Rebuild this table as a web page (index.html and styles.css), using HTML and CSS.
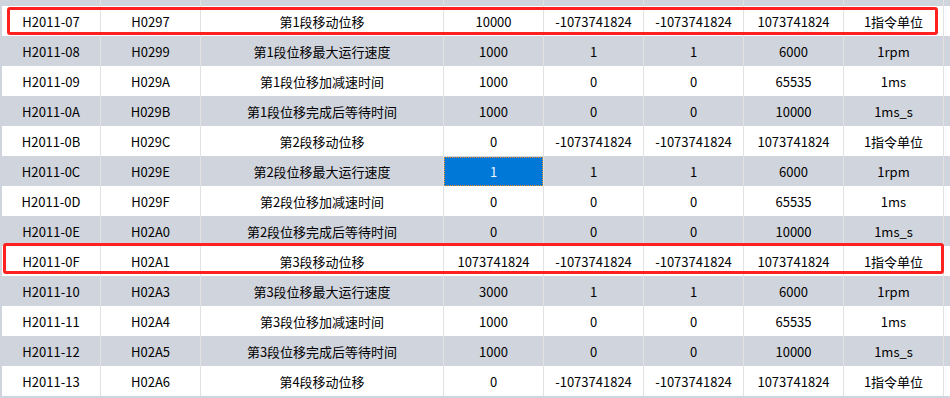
FILE: index.html
```html
<!DOCTYPE html>
<html lang="zh-CN">
<head>
<meta charset="utf-8">
<title>参数表</title>
<link rel="stylesheet" href="styles.css">
</head>
<body>
<div class="grid">
  <div class="row gap"><div class="c"></div><div class="c"></div><div class="c"></div><div class="c"></div><div class="c"></div><div class="c"></div><div class="c"></div><div class="c"></div><div class="f"></div></div>
  <div class="row w"><div class="c">H2011-07</div><div class="c">H0297</div><div class="c">第1段移动位移</div><div class="c">10000</div><div class="c">-1073741824</div><div class="c">-1073741824</div><div class="c">1073741824</div><div class="c">1指令单位</div><div class="f"></div></div>
  <div class="row g"><div class="c">H2011-08</div><div class="c">H0299</div><div class="c">第1段位移最大运行速度</div><div class="c">1000</div><div class="c">1</div><div class="c">1</div><div class="c">6000</div><div class="c">1rpm</div><div class="f"></div></div>
  <div class="row w"><div class="c">H2011-09</div><div class="c">H029A</div><div class="c">第1段位移加减速时间</div><div class="c">1000</div><div class="c">0</div><div class="c">0</div><div class="c">65535</div><div class="c">1ms</div><div class="f"></div></div>
  <div class="row g"><div class="c">H2011-0A</div><div class="c">H029B</div><div class="c">第1段位移完成后等待时间</div><div class="c">1000</div><div class="c">0</div><div class="c">0</div><div class="c">10000</div><div class="c">1ms_s</div><div class="f"></div></div>
  <div class="row w"><div class="c">H2011-0B</div><div class="c">H029C</div><div class="c">第2段移动位移</div><div class="c">0</div><div class="c">-1073741824</div><div class="c">-1073741824</div><div class="c">1073741824</div><div class="c">1指令单位</div><div class="f"></div></div>
  <div class="row g"><div class="c">H2011-0C</div><div class="c">H029E</div><div class="c">第2段位移最大运行速度</div><div class="c sel"><span class="selbox">1</span></div><div class="c">1</div><div class="c">1</div><div class="c">6000</div><div class="c">1rpm</div><div class="f"></div></div>
  <div class="row w"><div class="c">H2011-0D</div><div class="c">H029F</div><div class="c">第2段位移加减速时间</div><div class="c">0</div><div class="c">0</div><div class="c">0</div><div class="c">65535</div><div class="c">1ms</div><div class="f"></div></div>
  <div class="row g"><div class="c">H2011-0E</div><div class="c">H02A0</div><div class="c">第2段位移完成后等待时间</div><div class="c">0</div><div class="c">0</div><div class="c">0</div><div class="c">10000</div><div class="c">1ms_s</div><div class="f"></div></div>
  <div class="row w"><div class="c">H2011-0F</div><div class="c">H02A1</div><div class="c">第3段移动位移</div><div class="c">1073741824</div><div class="c">-1073741824</div><div class="c">-1073741824</div><div class="c">1073741824</div><div class="c">1指令单位</div><div class="f"></div></div>
  <div class="row g"><div class="c">H2011-10</div><div class="c">H02A3</div><div class="c">第3段位移最大运行速度</div><div class="c">3000</div><div class="c">1</div><div class="c">1</div><div class="c">6000</div><div class="c">1rpm</div><div class="f"></div></div>
  <div class="row w"><div class="c">H2011-11</div><div class="c">H02A4</div><div class="c">第3段位移加减速时间</div><div class="c">1000</div><div class="c">0</div><div class="c">0</div><div class="c">65535</div><div class="c">1ms</div><div class="f"></div></div>
  <div class="row g"><div class="c">H2011-12</div><div class="c">H02A5</div><div class="c">第3段位移完成后等待时间</div><div class="c">1000</div><div class="c">0</div><div class="c">0</div><div class="c">10000</div><div class="c">1ms_s</div><div class="f"></div></div>
  <div class="row w"><div class="c">H2011-13</div><div class="c">H02A6</div><div class="c">第4段移动位移</div><div class="c">0</div><div class="c">-1073741824</div><div class="c">-1073741824</div><div class="c">1073741824</div><div class="c">1指令单位</div><div class="f"></div></div>
  <div class="mark mark1"></div>
  <div class="mark mark2"></div>
</div>
</body>
</html>
```

FILE: styles.css
```css
html, body {
  margin: 0;
  padding: 0;
  background: #d0d4dc;
}
body {
  width: 950px;
  height: 398px;
  overflow: hidden;
  font-family: "Noto Sans CJK SC", "Noto Sans", sans-serif;
  font-size: 13px;
  color: #000;
}
.grid {
  position: relative;
  padding-left: 2px;
  border-bottom: 2px solid #d0d4dc;
  background: #d0d4dc;
}
.row {
  display: grid;
  grid-template-columns: 99px 100px 243px 100px 100px 100px 100px 100px 6px;
  height: 30px;
}
.row.gap {
  height: 6px;
}
.w { background: #ffffff; }
.g, .gap { background: #d0d4dc; }
.c {
  box-sizing: border-box;
  border-right: 1px solid #e2e2e2;
  display: flex;
  align-items: center;
  justify-content: center;
  white-space: nowrap;
  line-height: 1;
}
.sel {
  align-items: stretch;
  justify-content: stretch;
  padding-top: 1px;
}
.selbox {
  flex: 1;
  display: flex;
  align-items: center;
  justify-content: center;
  background: #0078d7;
  color: #f2f6fb;
  outline: 1px dotted #f28a18;
  outline-offset: -1px;
}
.mark {
  position: absolute;
  box-sizing: border-box;
  border: 3px solid #ff2020;
  border-radius: 3px;
}
.mark1 {
  left: 7px;
  top: 7px;
  width: 931px;
  height: 28px;
}
.mark2 {
  left: 3px;
  top: 243px;
  width: 941px;
  height: 31px;
}
```
